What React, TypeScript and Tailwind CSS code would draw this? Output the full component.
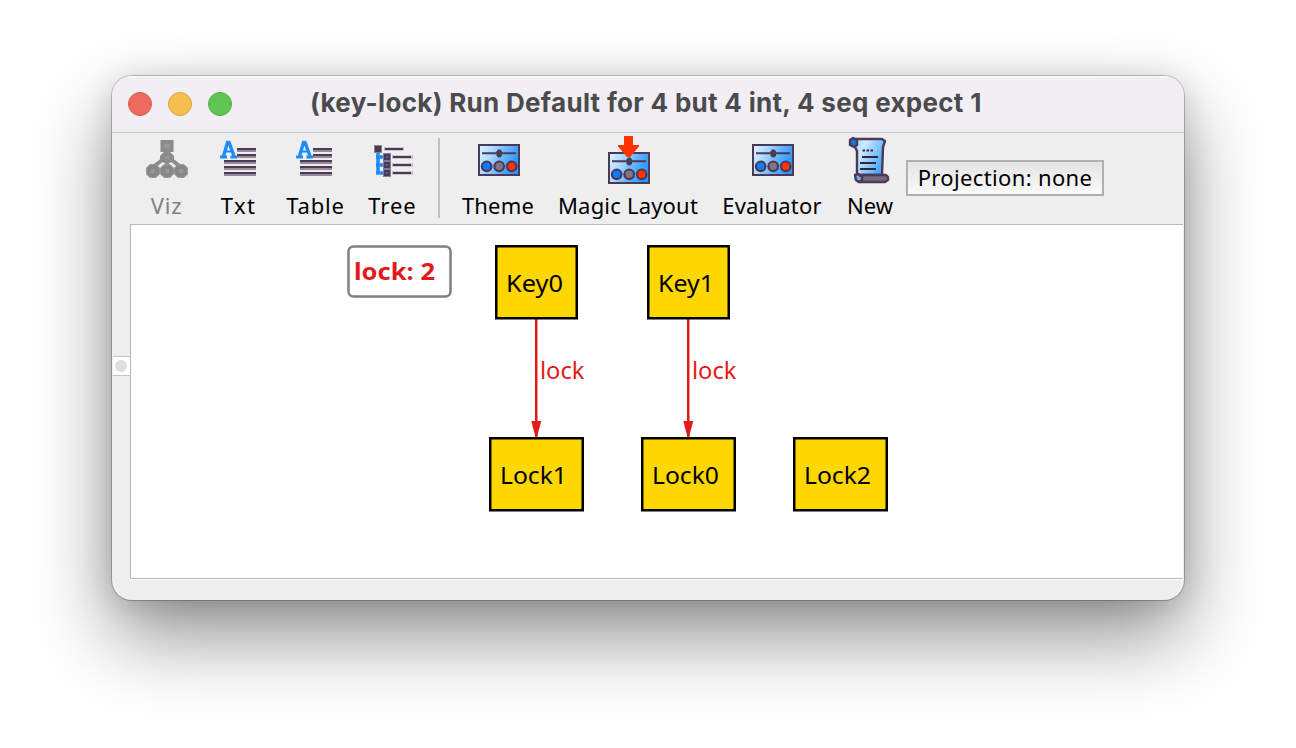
import React from "react";

const INK = "#4b3a56";

function VizIcon() {
  return (
    <svg width="48" height="48" viewBox="0 0 48 48" className="ml-[2px] shrink-0">
      <g transform="translate(-1 0)">
        <path d="M24 21 10 32M26 21 40 32M25 14V36" stroke="#8d8d8d" strokeWidth="4" fill="none" />
        <rect x="18.500" y="4" width="13" height="12" fill="#8b8b8b" />
        <path d="M22 16h6l4 4v3l-4 4h-6l-4-4v-3z" fill="#8b8b8b" />
        <g fill="#878787" stroke="#999" strokeWidth="1">
          <path d="M8 28.500h6l3.500 3.500v6L14 41.500H8L4.500 38v-6z" />
          <path d="M22 28.500h6l3.500 3.500v6L28 41.500h-6L18.500 38v-6z" />
          <path d="M36 28.500h6l3.500 3.500v6L42 41.500h-6L32.500 38v-6z" />
        </g>
        <path d="M22 7.500h6v5h-6zM9 33h4v4H9zM23 33h4v4h-4zM37 33h4v4h-4zM23 20h4v3h-4z" fill="#989898" />
      </g>
    </svg>
  );
}

function TextIcon({ pos = "" }: { pos?: string }) {
  return (
    <svg width="48" height="48" viewBox="0 0 48 48" className={`shrink-0 ${pos}`}>
      <path d="M23 13h19M23 19h19M10 25h32M10 31h32M10 37h32" stroke={INK} strokeWidth="2" />
      <path d="M23 15h19M23 21h19M10 27h32M10 33h32M10 39h32" stroke="#978a9c" strokeWidth="2" />
      <g fill="none" stroke="#1a8cff">
        <path d="M14 5 9.500 20M14.500 5l5.500 15" strokeWidth="3.400" />
        <path d="M10 15.500h9" strokeWidth="2.200" />
        <path d="M6 21h7M16.500 21h6.500" strokeWidth="3" />
      </g>
    </svg>
  );
}

function TreeIcon() {
  return (
    <svg width="48" height="48" viewBox="0 0 48 48" className="shrink-0">
      <path d="M10 16v22.500M8 21h9M8 29h9M8 37h9" stroke="#1a8cff" strokeWidth="3.500" fill="none" />
      <path d="M16 13h20M24 21h21M24 29h21M24 37h21" stroke="#c3bcc6" strokeWidth="3.500" />
      <path d="M17 13h18M25 21h18M25 29h18M25 37h18" stroke={INK} strokeWidth="2" />
      <g fill={INK} stroke="#897c90" strokeWidth="1">
        <rect x="6.500" y="9.500" width="7" height="7" />
        <rect x="15.500" y="17.500" width="7" height="7" />
        <rect x="15.500" y="25.500" width="7" height="7" />
        <rect x="15.500" y="33.500" width="7" height="7" />
      </g>
      <path d="M18 20h2v2h-2zM18 28h2v2h-2zM18 36h2v2h-2z" fill="#1a70d8" />
    </svg>
  );
}

function Panel({ id, y }: { id: string; y: number }) {
  return (
    <g transform={`translate(4 ${y})`}>
      <defs>
        <linearGradient id={id} x1="0" y1="0.1" x2="1" y2="0.4">
          <stop offset="0" stopColor="#d9f0ff" />
          <stop offset="0.3" stopColor="#b3dcff" />
          <stop offset="0.65" stopColor="#66b4ff" />
          <stop offset="1" stopColor="#2d94ff" />
        </linearGradient>
      </defs>
      <rect x="1" y="1" width="40" height="30" fill={`url(#${id})`} stroke={INK} strokeWidth="2" />
      <path d="M4 9.200h34" stroke={INK} strokeWidth="2" />
      <path d="M20 5.500h2.500l1.500 2v4l-1.500 2H20l-1.500-2v-4z" fill={INK} />
      <g stroke={INK} strokeWidth="2.200">
        <circle cx="8.700" cy="22.300" r="4.800" fill="#0a7cff" />
        <circle cx="21.200" cy="22.300" r="4.800" fill="#7d7786" />
        <circle cx="33.700" cy="22.300" r="4.800" fill="#ff3300" />
      </g>
    </g>
  );
}

function ThemeIcon({ id }: { id: string }) {
  return (
    <svg width="48" height="48" viewBox="0 0 48 48" className="shrink-0">
      <Panel id={id} y={8} />
    </svg>
  );
}

function MagicIcon() {
  return (
    <svg width="48" height="48" viewBox="0 0 48 48" className="shrink-0">
      <Panel id="magic" y={16} />
      <path d="M20 0h9v9h6v1.500L26 21h-3L14 10.500V9h6z" fill="#ff3300" />
    </svg>
  );
}

function ScrollIcon() {
  return (
    <svg width="48" height="48" viewBox="0 0 48 48" className="shrink-0">
      <defs>
        <linearGradient id="sheet" x1="0" y1="0" x2="1" y2="0.5">
          <stop offset="0" stopColor="#9ad2ff" />
          <stop offset="0.35" stopColor="#cfeaff" />
          <stop offset="1" stopColor="#4ba6ff" />
        </linearGradient>
      </defs>
      <g stroke={INK} strokeWidth="2.400" strokeLinejoin="round">
        <path d="M7 3h29l3 2-2 6-1 28H11V15L8 9z" fill="url(#sheet)" />
        <path d="M4 4l3-2 4 2v5l-3 2-4-2z" fill="#1479dd" />
        <path d="M12 39h28l2 2v3l-3 2H13l-3-2v-3z" fill="#746a7c" />
        <path d="M9 39l3-1 4 3v3l-3 2-3-2z" fill="#6bb2f0" />
      </g>
      <path d="M16.500 14.500h2.500M20.500 14.500h2.500M24.500 14.500h2.500" stroke="#33263c" strokeWidth="2" />
      <path d="M16 21h16M14 27h16M14 33h16" stroke="#33263c" strokeWidth="2" />
    </svg>
  );
}

function Tool({ icon, label, box, text }: { icon: React.ReactNode; label: string; box: string; text: string }) {
  return (
    <div className={`flex shrink-0 flex-col items-center ${box}`}>
      {icon}
      <span className={`mt-[5px] whitespace-nowrap text-[22px] leading-8 ${text}`}>{label}</span>
    </div>
  );
}

const nodes = [
  { label: "Key0", x: 496, y: 246, w: 80.5, tw: 57 },
  { label: "Key1", x: 648, y: 246, w: 80.5, tw: 56 },
  { label: "Lock1", x: 490, y: 438, w: 92.5, tw: 67 },
  { label: "Lock0", x: 642, y: 438, w: 92.5, tw: 67 },
  { label: "Lock2", x: 794, y: 438, w: 92.5, tw: 67 },
];

function Graph() {
  return (
    <svg width="1052" height="353" viewBox="131 225 1052 353" className="block" fontFamily="'Noto Sans', sans-serif">
      <rect x="348.500" y="246.500" width="102" height="50" rx="5" fill="#fff" stroke="#808080" strokeWidth="2.500" />
      <text x="354" y="280" fontSize="24" fontWeight="700" fill="#e31a1c" textLength="81" lengthAdjust="spacingAndGlyphs">lock: 2</text>
      {[536.25, 688.25].map((x) => (
        <g key={x}>
          <path d={`M${x} 319V438`} stroke="#e31a1c" strokeWidth="2.500" />
          <path d={`M${x - 5} 421h10L${x + 0.5} 438h-1z`} fill="#e31a1c" />
          <text x={x + 3.75} y="378.500" fontSize="23" fill="#e31a1c" textLength="44.500" lengthAdjust="spacingAndGlyphs">lock</text>
        </g>
      ))}
      {nodes.map((n) => (
        <g key={n.label}>
          <rect x={n.x + 0.25} y={n.y + 0.25} width={n.w} height="72" fill="#ffd700" stroke="#000" strokeWidth="2.500" />
          <text x={n.x + 10} y={n.y + 46} fontSize="24" textLength={n.tw} lengthAdjust="spacingAndGlyphs">{n.label}</text>
        </g>
      ))}
    </svg>
  );
}

export default function App() {
  return (
    <div className="flex h-[748px] w-[1296px] items-start overflow-hidden bg-white pl-[112px] pt-[76px] font-['Noto_Sans',sans-serif] text-black">
      <div className="flex h-[524px] w-[1072px] flex-col overflow-hidden rounded-[20px] bg-[#eeeeee] shadow-[0_0_0_1px_rgba(0,0,0,0.22),0_36px_80px_rgba(0,0,0,0.44),0_4px_30px_rgba(0,0,0,0.14)]">
        <header className="flex h-[57px] shrink-0 items-center border-b border-[#c8c6ca] bg-[#f1eff4] pl-4 shadow-[inset_0_1px_0_#fbfafc]">
          <div className="flex gap-4">
            <span className="size-6 rounded-full border border-[#d3574c] bg-[#ed6a5e]" />
            <span className="size-6 rounded-full border border-[#d8a141] bg-[#f5bf4f]" />
            <span className="size-6 rounded-full border border-[#52a842] bg-[#61c554]" />
          </div>
          <h1 className="ml-[78px] whitespace-nowrap pb-[3px] font-['Inter',sans-serif] text-[26px] font-bold leading-8 tracking-[0.3px] text-[#4b4a4d]">(key-lock) Run Default for 4 but 4 int, 4 seq expect 1</h1>
        </header>
        <div className="flex h-[91px] shrink-0 pl-[18px] pt-[3px]">
          <Tool icon={<VizIcon />} label="Viz" box="w-[72px]" text="-mr-px tracking-[0.8px] text-[#808080]" />
          <Tool icon={<TextIcon />} label="Txt" box="w-[72px]" text="-mr-px tracking-[1.4px]" />
          <Tool icon={<TextIcon pos="mr-[2px]" />} label="Table" box="w-[82px]" text="-mr-px tracking-[0.8px]" />
          <Tool icon={<TreeIcon />} label="Tree" box="w-[72px]" text="-mr-px tracking-[1px]" />
          <div className="ml-[10px] mr-[10px] mt-[2px] h-20 w-[2px] shrink-0 bg-[#c0c0c0]" />
          <Tool icon={<ThemeIcon id="theme" />} label="Theme" box="w-[96px]" text="tracking-[0.2px]" />
          <Tool icon={<MagicIcon />} label="Magic Layout" box="w-[164px]" text="tracking-[0.2px]" />
          <Tool icon={<ThemeIcon id="evaluator" />} label="Evaluator" box="w-[124px]" text="tracking-[0.2px]" />
          <Tool icon={<ScrollIcon />} label="New" box="w-[72px]" text="" />
          <button className="mt-6 h-9 w-[198px] shrink-0 whitespace-nowrap border-2 border-[#b0b0b0] bg-linear-to-b from-[#e4e4e4] to-[#fafafa] pb-[2px] text-[22px] leading-[30px] tracking-[0.36px]">Projection: none</button>
        </div>
        <div className="flex h-[355px] shrink-0">
          <div className="flex w-[18px] shrink-0 flex-col pl-px pt-[132px]">
            <div className="flex h-5 items-center border-y border-[#c4c4c4] bg-white pl-[2px]">
              <span className="size-3 rounded-full bg-[#dedede]" />
            </div>
          </div>
          <main className="mr-px flex-1 border-b border-l border-t border-[#b8b8b8] bg-white shadow-[0_1px_0_#fff]">
            <Graph />
          </main>
        </div>
      </div>
    </div>
  );
}
